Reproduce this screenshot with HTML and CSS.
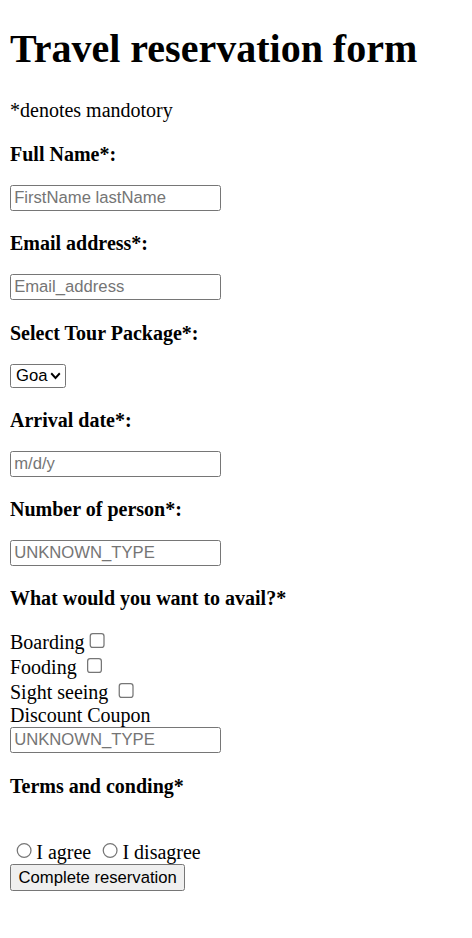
FILE: index.html
```html
<!DOCTYPE html>
<html lang="en" class="root">
<head>
<meta charset="utf-8">
<title>Travel reservation form</title>
<link rel="stylesheet" href="styles.css">
</head>
<body class="page">
<h1 class="title">Travel reservation form</h1>
<p class="note">*denotes mandotory</p>
<form class="form">
<p class="field-label"><b>Full Name*:</b></p>
<input class="text-input" type="text" placeholder="FirstName lastName">
<p class="field-label"><b>Email address*:</b></p>
<input class="text-input" type="text" placeholder="Email_address">
<p class="field-label"><b>Select Tour Package*:</b></p>
<select class="tour-select">
<option>Goa</option>
<option>Kerala</option>
<option>Shimla</option>
</select>
<p class="field-label"><b>Arrival date*:</b></p>
<input class="text-input" type="text" placeholder="m/d/y">
<p class="field-label"><b>Number of person*:</b></p>
<input class="text-input" type="text" placeholder="UNKNOWN_TYPE">
<p class="field-label"><b>What would you want to avail?*</b></p>
<label class="opt">Boarding<input class="check" type="checkbox"></label><br>
<label class="opt">Fooding <input class="check" type="checkbox"></label><br>
<label class="opt">Sight seeing <input class="check" type="checkbox"></label><br>
<span class="opt">Discount Coupon</span><br>
<input class="text-input" type="text" placeholder="UNKNOWN_TYPE">
<p class="field-label"><b>Terms and conding*</b></p>
<br>
<input class="radio" type="radio" name="terms" id="agree"><label for="agree">I agree</label> <input class="radio" type="radio" name="terms" id="disagree"><label for="disagree">I disagree</label><br>
<button class="submit" type="button">Complete reservation</button>
</form>
</body>
</html>
```
FILE: styles.css
```css
.root {
  zoom: 1.25;
  background: #ffffff;
}

.page {
  margin: 0 8px 8px;
  font-family: "Liberation Serif", "Times New Roman", serif;
  font-size: 16px;
  color: #000000;
}

.title {
  font-size: 32px;
  font-weight: bold;
  margin: 20px 0 21.44px;
}

.note {
  margin: 16px 0 17px;
}

.field-label {
  margin: 17px 0 15px;
}

.form {
  margin: 0;
}

.text-input {
  box-sizing: border-box;
  width: 169px;
  height: 21px;
  padding: 1px 2.5px;
  font-family: "Liberation Sans", Arial, sans-serif;
  font-size: 13.333px;
  border: 1px solid #767676;
  border-radius: 2px;
  color: #000000;
  background: #ffffff;
}

.text-input::placeholder {
  color: #757575;
}

.tour-select {
  -webkit-appearance: none;
  appearance: none;
  box-sizing: border-box;
  width: 45px;
  height: 19px;
  padding: 0 0 0 4px;
  font-family: "Liberation Sans", Arial, sans-serif;
  font-size: 13.333px;
  color: #000000;
  border: 1px solid #767676;
  border-radius: 2px;
  background-color: #ffffff;
  background-image: url("data:image/svg+xml;utf8,<svg xmlns='http://www.w3.org/2000/svg' width='9' height='6' viewBox='0 0 9 6'><path d='M1 1 L4.5 4.5 L8 1' fill='none' stroke='black' stroke-width='1.6'/></svg>");
  background-repeat: no-repeat;
  background-position: right 3px center;
  background-size: 9px 6px;
}

.submit {
  box-sizing: border-box;
  font-family: "Liberation Sans", Arial, sans-serif;
  font-size: 13.333px;
  padding: 1px 6px;
  height: 21px;
  background: #efefef;
  color: #000000;
  border: 1px solid #767676;
  border-radius: 2px;
}
```
